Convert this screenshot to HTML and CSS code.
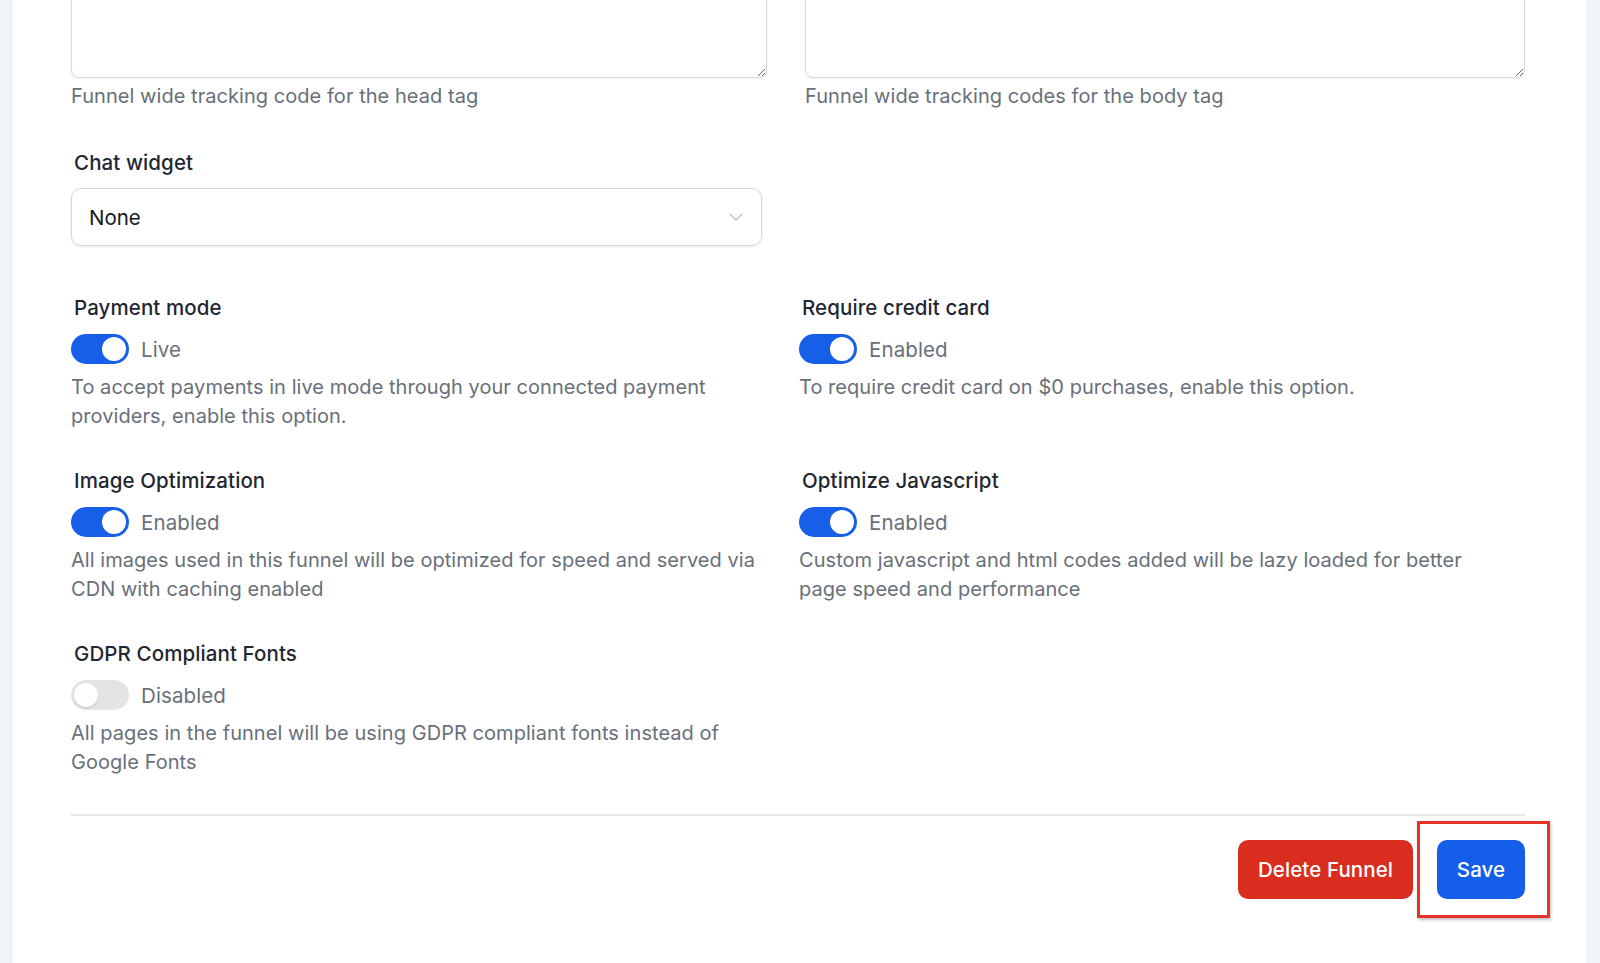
FILE: index.html
```html
<!DOCTYPE html>
<html lang="en">
<head>
<meta charset="utf-8">
<title>Funnel settings</title>
<link rel="stylesheet" href="styles.css">
</head>
<body>
<main class="card">
  <section class="tracking">
    <div class="field">
      <textarea class="code-box" aria-label="Head tracking code"></textarea>
      <p class="hint">Funnel wide tracking code for the head tag</p>
    </div>
    <div class="field">
      <textarea class="code-box" aria-label="Body tracking code"></textarea>
      <p class="hint">Funnel wide tracking codes for the body tag</p>
    </div>
  </section>

  <section class="chat">
    <label class="label">Chat widget</label>
    <div class="select">
      <span>None</span>
      <svg class="chevron" width="14" height="8" viewBox="0 0 14 8"><polyline points="1,1 7,7 13,1" fill="none" stroke="#b4b9c0" stroke-width="1.2"/></svg>
    </div>
  </section>

  <section class="options">
    <div class="option">
      <div class="label">Payment mode</div>
      <div class="switch-row"><span class="switch on"></span><span class="state">Live</span></div>
      <p class="desc">To accept payments in live mode through your connected payment providers, enable this option.</p>
    </div>
    <div class="option">
      <div class="label">Require credit card</div>
      <div class="switch-row"><span class="switch on"></span><span class="state">Enabled</span></div>
      <p class="desc">To require credit card on $0 purchases, enable this option.</p>
    </div>
    <div class="option">
      <div class="label">Image Optimization</div>
      <div class="switch-row"><span class="switch on"></span><span class="state">Enabled</span></div>
      <p class="desc">All images used in this funnel will be optimized for speed and served via CDN with caching enabled</p>
    </div>
    <div class="option">
      <div class="label">Optimize Javascript</div>
      <div class="switch-row"><span class="switch on"></span><span class="state">Enabled</span></div>
      <p class="desc">Custom javascript and html codes added will be lazy loaded for better page speed and performance</p>
    </div>
    <div class="option">
      <div class="label">GDPR Compliant Fonts</div>
      <div class="switch-row"><span class="switch"></span><span class="state">Disabled</span></div>
      <p class="desc">All pages in the funnel will be using GDPR compliant fonts instead of Google Fonts</p>
    </div>
  </section>

  <footer class="actions">
    <button class="btn danger">Delete Funnel</button>
    <button class="btn primary">Save<span class="highlight"></span></button>
  </footer>
</main>
</body>
</html>
```

FILE: styles.css
```css
* { box-sizing: border-box; }

html, body {
  margin: 0;
  background: #f2f5f8;
  font-family: Inter, "Noto Sans", sans-serif;
  overflow: hidden;
}

.card {
  margin: -40px 14px 0 11px;
  min-height: calc(100vh + 40px);
  background: #fff;
  border-left: 1px solid #e4e8ec;
  padding: 0 61px 0 59px;
}

/* tracking code textareas */
.tracking {
  display: grid;
  grid-template-columns: 696px 720px;
  column-gap: 38px;
}

.code-box {
  display: block;
  width: 100%;
  height: 118px;
  border: 1px solid #d6d9dd;
  border-radius: 8px;
  box-shadow: 0 1px 2px rgba(16, 24, 40, 0.06);
  resize: vertical;
  background: #fff;
}

.hint {
  margin: 4px 0 0;
  font-size: 20px;
  line-height: 29px;
  color: #68707a;
  letter-spacing: 0.05px;
}

/* chat widget select */
.chat {
  margin-top: 38px;
  width: 691px;
}

.label {
  display: block;
  padding-left: 3px;
  font-size: 20.5px;
  line-height: 28px;
  font-weight: 500;
  color: #1f2733;
  letter-spacing: 0.1px;
}

.select {
  margin-top: 11px;
  height: 58px;
  border: 1px solid #d4d7dc;
  border-radius: 10px;
  box-shadow: 0 1px 3px rgba(16, 24, 40, 0.08);
  display: flex;
  align-items: center;
  justify-content: space-between;
  padding: 0 18px 0 17px;
  font-size: 20.5px;
  color: #141a22;
}

/* toggle options */
.options {
  margin-top: 48px;
  display: grid;
  grid-template-columns: 728px 1fr;
  row-gap: 36px;
}

.option { max-width: 690px; }

.switch-row {
  margin-top: 12px;
  display: flex;
  align-items: center;
  gap: 12px;
}

.switch {
  position: relative;
  width: 58px;
  height: 30px;
  border-radius: 15px;
  background: #e3e4e6;
  flex: none;
}

.switch::after {
  content: "";
  position: absolute;
  top: 3px;
  left: 3px;
  width: 24px;
  height: 24px;
  border-radius: 50%;
  background: #fff;
  box-shadow: 0 1px 2px rgba(0, 0, 0, 0.15);
}

.switch.on { background: #175ee8; }
.switch.on::after { left: 31px; box-shadow: none; }

.state {
  font-size: 20.5px;
  color: #68707a;
  letter-spacing: 0.1px;
}

.desc {
  margin: 9px 0 0;
  font-size: 20px;
  line-height: 29px;
  color: #68707a;
  letter-spacing: 0.05px;
}

/* footer buttons */
.actions {
  margin-top: 37px;
  border-top: 2px solid #e6e8eb;
  padding-top: 24px;
  display: flex;
  justify-content: flex-end;
  gap: 24px;
}

.btn {
  height: 59px;
  border: none;
  border-radius: 10px;
  color: #fff;
  font-family: Inter, "Noto Sans", sans-serif;
  font-size: 20.5px;
  font-weight: 500;
  letter-spacing: 0.1px;
  padding: 0 16px;
}

.danger { background: #d92d20; width: 175px; }
.primary { background: #155eea; width: 88px; position: relative; }

/* review marker drawn around the save button */
.highlight {
  position: absolute;
  left: -20px;
  top: -19px;
  width: 133px;
  height: 97px;
  border: 3px solid #e6332a;
  box-shadow: 1px 2px 3px rgba(0, 0, 0, 0.25);
  pointer-events: none;
}
```
